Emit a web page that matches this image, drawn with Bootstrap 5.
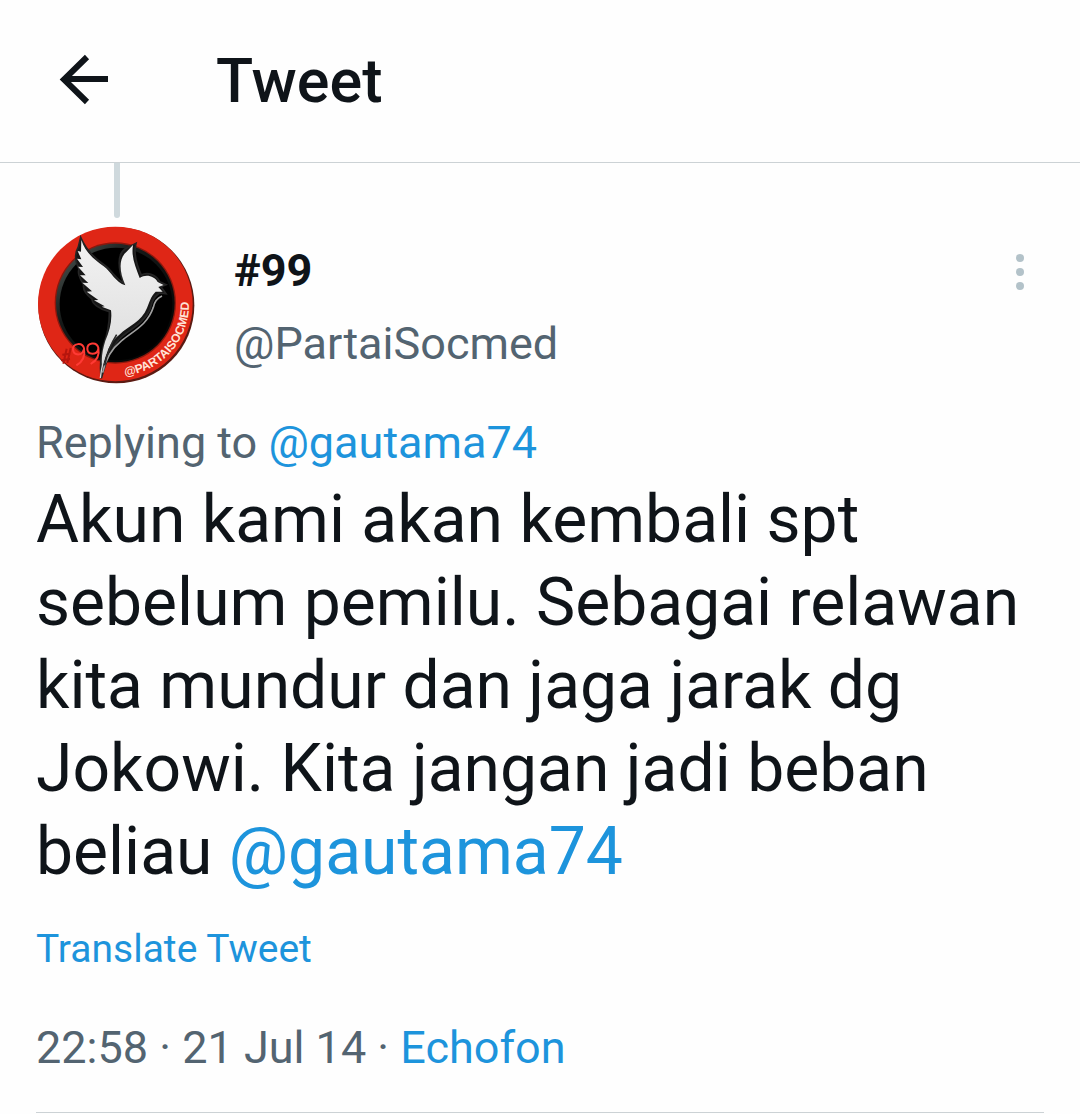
<!DOCTYPE html>
<html lang="id">
<head>
<meta charset="utf-8">
<meta name="viewport" content="width=device-width, initial-scale=1">
<title>Tweet</title>
<link href="https://cdn.jsdelivr.net/npm/bootstrap@5.3.0/dist/css/bootstrap.min.css" rel="stylesheet">
<style>
body { font-family: Roboto, "Liberation Sans", sans-serif; color: #0f1419; background: #fefefe; font-size: 45px; line-height: 54px; }
a { color: #1d94dc; text-decoration: none; }
.topbar { height: 163px; padding: 0 54px; gap: 102px; border-bottom: 1px solid #ccd2d5; }
.topbar h1 { font-size: 61px; line-height: 74px; font-weight: 500; }
.icon-btn { border: 0; background: none; padding: 0; color: inherit; }
.tweet { padding: 0 36px; }
.thread-col { width: 162px; }
.thread-line { width: 6px; height: 55px; background: #cfd9dd; border-radius: 0 0 3px 3px; }
.avatar { width: 160px; height: 160px; margin-top: 6px; }
.identity { padding: 81px 0 0 36px; gap: 19px; }
.more-btn { margin: 88px 16px 0 0; }
.muted { color: #536471; }
.replying { padding-top: 29px; line-height: 60px; }
.tweet-text { font-size: 66px; line-height: 83px; padding-top: 5px; }
.translate { font-size: 39px; line-height: 46px; margin-top: 33px; }
.stamp { padding: 49px 0 37px; border-bottom: 1px solid #ccd2d5; }
</style>
</head>
<body>
<header class="topbar d-flex align-items-center">
  <button class="icon-btn d-flex" type="button" aria-label="Back">
    <svg width="60" height="60" viewBox="0 0 60 60" fill="none" stroke="currentColor" stroke-width="6"><path d="M54 28H11M33 6L10 28.500L33 51"/></svg>
  </button>
  <h1 class="mb-0">Tweet</h1>
</header>
<main>
  <article class="tweet">
    <div class="d-flex align-items-start">
      <div class="thread-col d-flex flex-column align-items-center flex-shrink-0">
        <div class="thread-line"></div>
        <svg class="avatar" viewBox="22 28 480 480" role="img" aria-label="#99 @PARTAISOCMED">
          <defs>
            <linearGradient id="rim" x1="0" y1="0" x2="1" y2="1"><stop offset="0" stop-color="#56605c"/><stop offset=".35" stop-color="#161a19"/><stop offset="1" stop-color="#000"/></linearGradient>
            <linearGradient id="bird" x1="0" y1="0" x2="0" y2="1"><stop offset="0" stop-color="#f2f2f2"/><stop offset="1" stop-color="#dcdcdc"/></linearGradient>
            <path id="ring" d="M286 483A215 215 0 0 0 470 212"/>
          </defs>
          <circle cx="260" cy="272" r="234" fill="#5b1a12"/>
          <circle cx="257" cy="268" r="232" fill="#df2616"/>
          <circle cx="257" cy="265" r="182" fill="#8d170c"/>
          <circle cx="257" cy="265" r="178" fill="url(#rim)"/>
          <circle cx="259" cy="268" r="169" fill="#000"/>
          <g fill="none" stroke="#ff3a35" stroke-width="6">
            <path d="M98 420L122 417M94 437L121 433M111 402L101 447M123 400L113 445" stroke="#b5150d"/>
            <path d="M162 405C158 424 132 424 130 405C129 385 158 382 163 401C167 424 158 442 140 452"/>
            <path d="M206 403C202 422 174 422 173 403C172 383 201 380 206 399C210 420 201 438 183 448"/>
          </g>
          <path d="M215 491C211 466 212 431 222 391C231 365 240 325 239 291C209 285 186 266 187 253C164 235 160 219 162 210C148 190 144 171 148 164C134 139 136 113 146 97L153 68C168 104 193 130 224 151C246 167 260 195 282 205C265 163 262 119 286 103L319 86C310 119 321 151 335 181C354 170 380 181 390 201L409 210L394 216L409 237L389 235C369 249 366 266 361 284C343 326 303 343 278 365C251 387 232 427 215 491Z" fill="#161616" stroke="#252525" stroke-width="5"/>
          <path d="M219 474C226 438 244 404 276 378C310 349 353 332 371 278Q376 253 397 244" fill="none" stroke="#a0a0a0" stroke-width="5"/>
          <path d="M155 76C166 112 194 135 222 155C245 172 258 204 287 212C267 168 268 131 290 112L310 91C304 126 317 155 330 190C349 177 374 184 384 202L402 211L386 217L399 231L378 231C362 247 359 264 352 280C336 322 296 334 269 360C242 381 229 415 217 457C214 427 220 400 227 378C240 348 248 318 244 287L216 276L225 275L193 257L206 256L171 231L187 230L158 204L176 205L151 182L168 182L145 156L160 157L142 132L155 134L144 109L154 111Z" fill="url(#bird)"/>
          <path d="M225 452Q235 400 261 360" fill="none" stroke="#292929" stroke-width="5"/>
          <path d="M212 490Q217 445 232 407" fill="none" stroke="#d8d8d8" stroke-width="4"/>
          <text font-family="Liberation Sans, sans-serif" font-size="36" font-weight="700" fill="#ffe3d8"><textPath href="#ring">@PARTAISOCMED</textPath></text>
        </svg>
      </div>
      <div class="identity d-flex flex-column flex-grow-1">
        <strong>#99</strong>
        <span class="muted">@PartaiSocmed</span>
      </div>
      <button class="icon-btn more-btn d-flex" type="button" aria-label="More">
        <svg width="16" height="42" viewBox="0 0 16 42" fill="#b3c2c9"><circle cx="8" cy="7" r="4"/><circle cx="8" cy="21" r="4"/><circle cx="8" cy="35" r="4"/></svg>
      </button>
    </div>
    <div class="replying muted">Replying to <a href="#">@gautama74</a></div>
    <p class="tweet-text mb-0">Akun kami akan kembali spt sebelum pemilu. Sebagai relawan kita mundur dan jaga jarak dg Jokowi. Kita jangan jadi beban beliau <a href="#">@gautama74</a></p>
    <a class="translate d-block" href="#">Translate Tweet</a>
    <div class="stamp muted">22:58 · 21 Jul 14 · <a href="#">Echofon</a></div>
  </article>
</main>
<script src="https://cdn.jsdelivr.net/npm/bootstrap@5.3.0/dist/js/bootstrap.bundle.min.js"></script>
</body>
</html>
